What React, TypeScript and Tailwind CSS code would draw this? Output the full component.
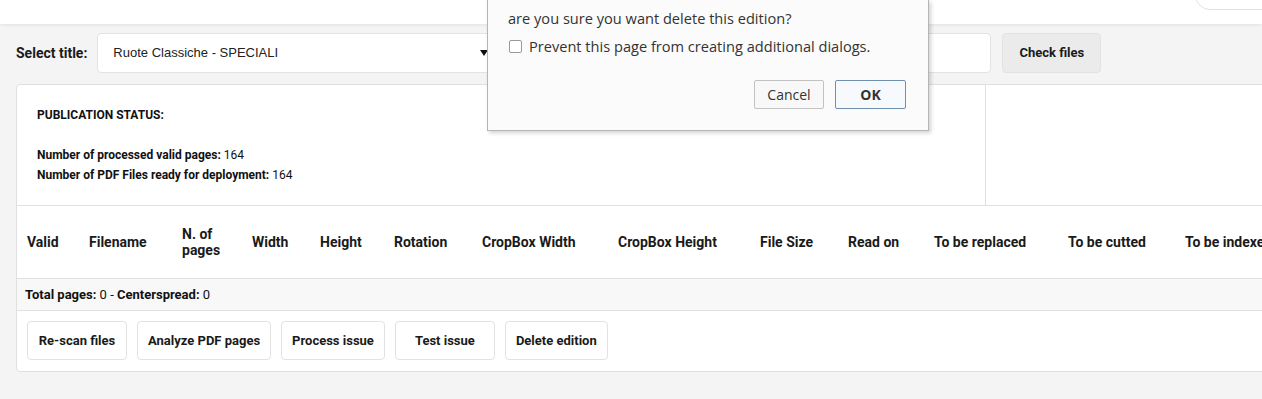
const columns = [
  { label: 'Valid', w: 'w-[62px]' },
  { label: 'Filename', w: 'w-[93px]' },
  { label: 'N. of pages', w: 'w-[70px]' },
  { label: 'Width', w: 'w-[68px]' },
  { label: 'Height', w: 'w-[74px]' },
  { label: 'Rotation', w: 'w-[88px]' },
  { label: 'CropBox Width', w: 'w-[136px]' },
  { label: 'CropBox Height', w: 'w-[142px]' },
  { label: 'File Size', w: 'w-[88px]' },
  { label: 'Read on', w: 'w-[86px]' },
  { label: 'To be replaced', w: 'w-[134px]' },
  { label: 'To be cutted', w: 'w-[117px]' },
  { label: 'To be indexed', w: 'w-[140px]' },
]

const actions = ['Re-scan files', 'Analyze PDF pages', 'Process issue', 'Test issue', 'Delete edition']

export default function App() {
  return (
    <div className="relative h-[399px] w-full overflow-hidden bg-[#f4f4f4] font-['Roboto',sans-serif] text-[#111]">
      {/* Top bar */}
      <header className="flex h-[24px] justify-end overflow-hidden bg-white shadow-[0_1px_3px_rgba(0,0,0,0.08)]">
        <div className="-mr-[40px] -mt-[20px] h-[30px] w-[107px] rounded-[20px] border border-[#e2e2e2] bg-white" />
      </header>

      {/* Title selection row */}
      <div className="mt-[9px] flex h-[40px] items-center pl-[16px]">
        <span className="text-[14px] font-bold text-[#1a1a1a]">Select title:</span>
        <div className="ml-[10px] flex h-[40px] w-[400px] items-center justify-between rounded-[4px] border border-[#e3e3e3] bg-white pl-[15px] pr-[8px]">
          <span className="font-['Liberation_Sans',Arial,sans-serif] text-[13px] text-[#222]">Ruote Classiche - SPECIALI</span>
          <svg width="8" height="6" viewBox="0 0 8 6">
            <path d="M0 0h8L4 6z" fill="#111" />
          </svg>
        </div>
        <div className="ml-[10px] h-[40px] w-[484px] rounded-[4px] border border-[#e3e3e3] bg-white" />
        <button className="ml-[11px] h-[40px] w-[99px] rounded-[4px] border border-[#e2e2e2] bg-[#ebebeb] text-[13px] font-bold text-[#1a1a1a]">
          Check files
        </button>
      </div>

      {/* Main card */}
      <div className="ml-[16px] mt-[11px] w-[1320px] rounded-[4px] border border-[#e0e0e0] bg-white">
        <div className="flex">
          <div className="w-[969px] border-r border-[#e0e0e0] px-[20px] pb-[20px] pt-[20px] text-[12px] leading-[20px]">
            <div className="font-bold">PUBLICATION STATUS:</div>
            <div className="h-[20px]" />
            <div>
              <span className="font-bold">Number of processed valid pages:</span> 164
            </div>
            <div>
              <span className="font-bold">Number of PDF Files ready for deployment:</span> 164
            </div>
          </div>
          <div className="flex-1" />
        </div>

        <div className="flex h-[73px] items-center border-t border-[#e0e0e0]">
          {columns.map((c) => (
            <div key={c.label} className={`${c.w} shrink-0 pl-[10px] text-[14px] font-bold leading-[16px] text-[#1a1a1a]`}>
              {c.label === 'N. of pages' ? (
                <>
                  N. of
                  <br />
                  pages
                </>
              ) : (
                c.label
              )}
            </div>
          ))}
        </div>

        <div className="flex h-[33px] items-center border-y border-[#e0e0e0] bg-[#f8f8f8] pl-[8px] text-[13px]">
          <span className="font-bold">Total pages:</span>&nbsp;0 -&nbsp;<span className="font-bold">Centerspread:</span>&nbsp;0
        </div>

        <div className="flex gap-[10px] px-[10px] pb-[11px] pt-[10px]">
          {actions.map((a) => (
            <button
              key={a}
              className="h-[39px] min-w-[100px] rounded-[4px] border border-[#e2e2e2] bg-white px-[10px] text-[13px] font-bold text-[#1a1a1a]"
            >
              {a}
            </button>
          ))}
        </div>
      </div>

      {/* Browser confirm dialog */}
      <div className="absolute left-[487px] top-0 h-[131px] w-[442px] border-x border-b border-[#b5b5b5] bg-[#fbfbfb] pl-[20px] pr-[22px] pt-[8px] font-['Open_Sans','Noto_Sans',sans-serif] text-[14.6px] text-[#333] shadow-[2px_2px_4px_rgba(0,0,0,0.18)]">
        <div className="leading-[20px]">are you sure you want delete this edition?</div>
        <label className="mt-[8px] flex items-center leading-[20px]">
          <span className="ml-[1px] mr-[7px] h-[13px] w-[13px] rounded-[2px] border border-[#9a9a9a] bg-white" />
          Prevent this page from creating additional dialogs.
        </label>
        <div className="mt-[24px] flex justify-end gap-[11px]">
          <button className="h-[29px] w-[70px] rounded-[2px] border border-[#c2c2c2] bg-[#f8f8f8] text-[14px] text-[#333]">
            Cancel
          </button>
          <button className="h-[29px] w-[71px] rounded-[2px] border border-[#6f8fb0] bg-[#f7fafd] text-[14px] font-bold text-[#333]">
            OK
          </button>
        </div>
      </div>
    </div>
  )
}
